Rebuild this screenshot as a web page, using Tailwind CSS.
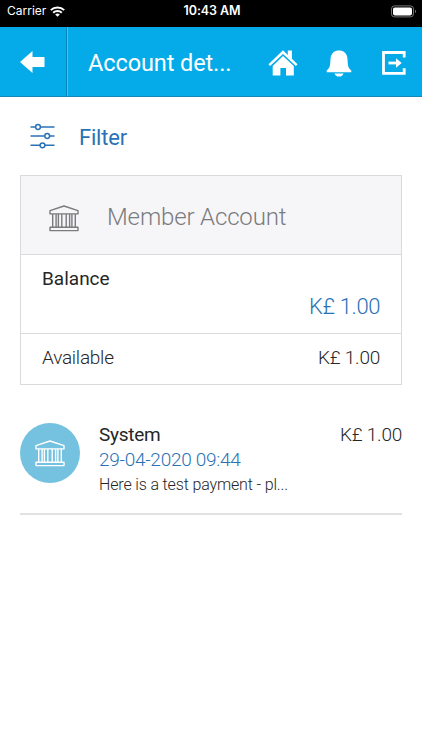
<!DOCTYPE html>
<html lang="en">
<head>
<meta charset="utf-8">
<meta name="viewport" content="width=device-width, initial-scale=1">
<title>Account details</title>
<script src="https://cdn.jsdelivr.net/npm/@tailwindcss/browser@4"></script>
</head>
<body class="h-[750px] w-[422px] overflow-hidden bg-white font-['Roboto',sans-serif] text-[#262626]">
<svg class="hidden">
  <symbol id="bank" viewBox="0 0 30 27">
    <g fill="none" stroke="currentColor" stroke-width="1.4" stroke-linejoin="round">
      <path d="M1 5.6 L15 1 L29 5.6 V8.9 H1Z"/>
      <path d="M1 22.2 H29 V25.6 H1Z"/>
      <path d="M3.7 9V22M7.1 9V22M9.4 9V22M12.8 9V22M17.2 9V22M20.6 9V22M22.9 9V22M26.3 9V22"/>
    </g>
  </symbol>
</svg>
<div class="flex h-[27px] items-center bg-black pb-[5px] text-white font-['Inter',sans-serif]">
  <div class="flex flex-1 items-center gap-[4px] pl-[7px]">
    <span class="text-[12px] leading-4">Carrier</span>
    <svg class="h-[11px] w-[15px]" viewBox="0 0 15 11" fill="none" stroke="#fff" stroke-width="2"><path d="M.8 4.1a9.6 9.6 0 0 1 13.4 0M3.2 6.7a6.1 6.1 0 0 1 8.6 0"/><path d="M7.5 10.8 5.2 8.5a3.3 3.3 0 0 1 4.6 0Z" fill="#fff" stroke="none"/></svg>
  </div>
  <span class="text-[12.5px] font-semibold leading-4 tracking-[-0.1px]">10:43 AM</span>
  <div class="flex flex-1 justify-end pr-[5px]">
    <svg class="h-[13px] w-[26px]" viewBox="0 0 26 13"><rect x=".5" y=".9" width="22" height="11" rx="3" fill="none" stroke="#777"/><rect x="2" y="2.4" width="19" height="8" rx="1.8" fill="#fff"/><path d="M24 4.8q2 1.6 0 3.2Z" fill="#888"/></svg>
  </div>
</div>
<header class="flex h-[70px] items-center border-b border-[#1688b8] bg-[#05aae8] text-white">
  <div class="flex h-full w-[67px] items-center justify-center border-r border-[#0786b9] pr-px">
    <svg class="h-[22px] w-[25px]" viewBox="0 0 25 22"><path d="M0 11 12.5 0V6H24.5V16H12.5V22Z" fill="#fff"/></svg>
  </div>
  <div class="h-full w-px bg-[#49c1ee]"></div>
  <h1 class="w-[200px] pl-[20px] pt-[2px] text-[23.5px] leading-8 tracking-[-0.1px]"><span>Account det...</span></h1>
  <svg class="mt-[2px] h-[26px] w-[30px]" viewBox="0 0 30 26" fill="#fff"><path d="M15 .3 19.8 5V.5h4.1v8.3l5.6 5.4-1.6 1.8L15 3.9 2.1 16 .5 14.2Z"/><path d="M15 5.9 25.8 16V25.4H18V18h-5.6v7.4H4.7V16Z"/></svg>
  <svg class="ml-[28px] mt-[3px] h-[27px] w-[26px]" viewBox="0 0 26 27" fill="#fff"><path d="M13 .4C17.5.4 20.8 3 21.4 8c.6 6-.2 9.2 3.9 12.6v1.6H.7v-1.6C4.8 17.2 4 14 4.6 8 5.2 3 8.500 .4 13 .4Z"/><path d="M8.500 23.400H17.500Q16.500 26.500 13 26.500T8.500 23.400Z"/></svg>
  <svg class="ml-[30px] mt-[3px] h-[24px] w-[24px]" viewBox="0 0 24 24" fill="none" stroke="#fff" stroke-width="2.800"><path d="M22.200 6.500V1.500H1.500V22.300H22.200V17.300"/><path d="M6.500 12H15"/><path d="M14 7.300 19.700 12 14 16.700Z" fill="#fff" stroke="none"/></svg>
</header>
<main class="px-5">
  <div class="flex h-[78px] items-center pl-[10px] text-[#2a72b5]">
    <svg class="h-[26px] w-[26px]" viewBox="0 0 26 26" fill="none" stroke="currentColor" stroke-width="1.500"><path d="M.5 4H5.500M10.500 4H24.500M.5 13H14.700M19.700 13H24.500M.5 22.300H10M15 22.300H24.500"/><circle cx="8" cy="4" r="2.400"/><circle cx="17.200" cy="13" r="2.400"/><circle cx="12.500" cy="22.300" r="2.400"/></svg>
    <span class="ml-[23px] pt-[3px] text-[22px] leading-8 tracking-[-0.2px]"><span>Filter</span></span>
  </div>
  <section class="h-[210px] border border-[#d9dadc]">
    <div class="flex h-[79px] items-center border-b border-[#d9dadc] bg-[#f6f6f9] pl-[28px] text-[#7b7b7d]">
      <svg class="mt-[7px] h-[27px] w-[30px]"><use href="#bank"/></svg>
      <span class="ml-[28px] mt-[3px] text-[24px] font-light leading-8 tracking-[-0.15px]"><span>Member Account</span></span>
    </div>
    <div class="flex h-[79px] flex-col border-b border-[#d9dadc] px-[21px] pt-[10px]">
      <span class="text-[19px] leading-7"><span>Balance</span></span>
      <span class="self-end text-[22px] font-light leading-7 tracking-[-0.4px] text-[#2a72b5]">K£ 1.00</span>
    </div>
    <div class="flex h-[50px] items-center justify-between px-[21px] pb-[3px] text-[19px] font-light leading-7 tracking-[-0.25px]">
      <span>Available</span><span>K£ 1.00</span>
    </div>
  </section>
  <article class="flex h-[130px] border-b-2 border-[#e2e2e4] pt-[38px]">
    <div class="flex h-[60px] w-[60px] shrink-0 items-center justify-center rounded-full bg-[#75c2e0] text-white">
      <svg class="h-[27px] w-[30px]"><use href="#bank"/></svg>
    </div>
    <div class="-mt-px ml-[19px] flex-1">
      <div class="flex justify-between text-[19px] leading-[25px] tracking-[-0.25px]"><span>System</span><span class="font-light">K£ 1.00</span></div>
      <div class="text-[19px] font-light leading-[25px] tracking-[-0.28px] text-[#2a72b5]"><span>29-04-2020 09:44</span></div>
      <div class="pt-px text-[16px] font-light leading-[24px] tracking-[-0.15px]"><span>Here is a test payment - pl...</span></div>
    </div>
  </article>
</main>
</body>
</html>
